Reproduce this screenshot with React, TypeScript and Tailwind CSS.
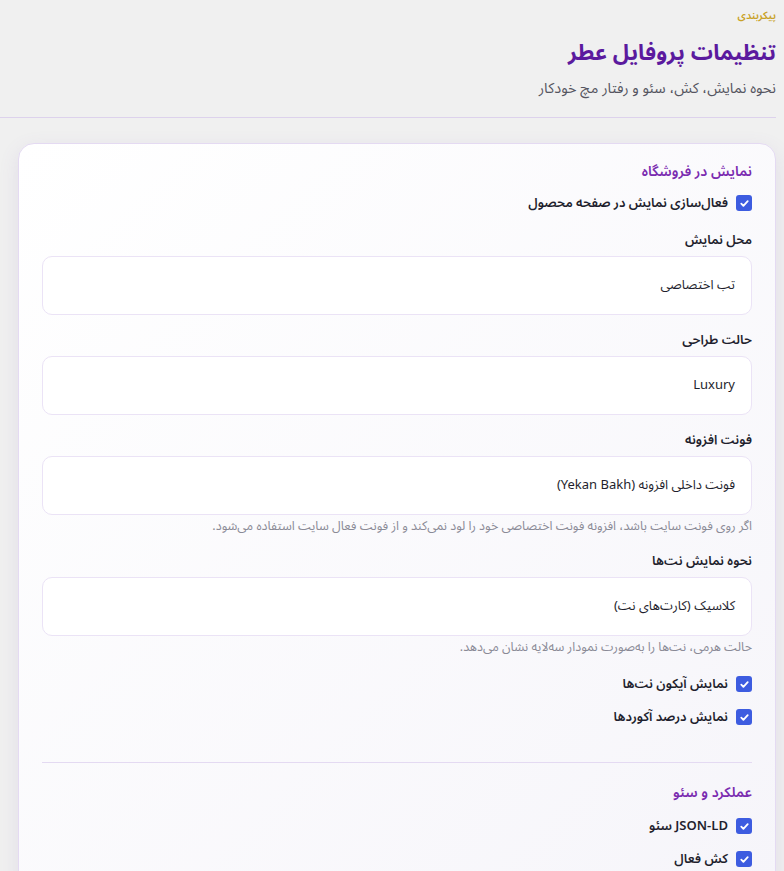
import React from "react";

const font = { fontFamily: '"Noto Sans Arabic", "Noto Sans", "DejaVu Sans", sans-serif' };

const Check: React.FC<{ label: React.ReactNode; className?: string }> = ({ label, className }) => (
  <label className={`flex h-5 items-center gap-2 text-[13px] font-semibold leading-5 text-[#1f1f2e] ${className ?? ""}`}>
    <span className="flex h-4 w-4 shrink-0 items-center justify-center rounded-[3px] bg-[#3d5ce0]">
      <svg width="11" height="11" viewBox="0 0 12 12" fill="none">
        <path d="M2.5 6.2l2.3 2.3 4.7-5" stroke="white" strokeWidth="2" strokeLinecap="round" strokeLinejoin="round" />
      </svg>
    </span>
    <span>{label}</span>
  </label>
);

const Field: React.FC<{ label: string; value: string; help?: string; className?: string }> = ({ label, value, help, className }) => (
  <div className={className ?? "mt-[15px]"}>
    <div className="text-[13px] font-semibold leading-5 text-[#1f1f2e]">{label}</div>
    <div className="mt-[6px] flex h-[59px] items-center rounded-[10px] border border-[#ebe3f6] bg-white px-4 text-[13px] text-[#1f1f2e]">
      {value}
    </div>
    {help && <p className="mt-[3px] text-[12.5px] leading-4 text-[#8a8a96]">{help}</p>}
  </div>
);

export default function App() {
  return (
    <div dir="rtl" style={font} className="min-h-screen bg-[#f0f0f0] pr-2">
      <header className="pt-[6px]">
        <div className="text-[10.5px] font-semibold leading-5 text-[#c9a227]">پیکربندی</div>
        <h1 className="mt-[11px] text-[22px] font-bold leading-8 text-[#5b1a9e]">تنظیمات پروفایل عطر</h1>
        <p className="mt-[9px] text-[14.5px] leading-[22px] text-[#555560]">نحوه نمایش، کش، سئو و رفتار مچ خودکار</p>
      </header>
      <hr className="mt-[17px] border-t border-[#ddd2ec]" />
      <div className="ml-[18px] mt-[25px] rounded-[16px] border border-[#e4daf2] bg-gradient-to-br from-white to-[#f6f5fa] px-[23px] pt-[18px] pb-6 shadow-[0_6px_20px_rgba(120,90,170,0.12)]">
        <h2 className="text-[14px] font-semibold leading-5 text-[#7a2bb0]">نمایش در فروشگاه</h2>
        <Check className="mt-[11px]" label="فعال‌سازی نمایش در صفحه محصول" />
        <Field className="mt-[17px]" label="محل نمایش" value="تب اختصاصی" />
        <Field label="حالت طراحی" value="Luxury" />
        <Field
          label="فونت افزونه"
          value="فونت داخلی افزونه (Yekan Bakh)"
          help="اگر روی فونت سایت باشد، افزونه فونت اختصاصی خود را لود نمی‌کند و از فونت فعال سایت استفاده می‌شود."
        />
        <Field
          className="mt-[17px]"
          label="نحوه نمایش نت‌ها"
          value="کلاسیک (کارت‌های نت)"
          help="حالت هرمی، نت‌ها را به‌صورت نمودار سه‌لایه نشان می‌دهد."
        />
        <div className="mt-[19px] flex flex-col gap-[13px]">
          <Check label="نمایش آیکون نت‌ها" />
          <Check label="نمایش درصد آکوردها" />
        </div>
        <hr className="mt-[35px] border-t border-[#e4daf2]" />
        <h2 className="mt-[20px] text-[14px] font-semibold leading-5 text-[#7a2bb0]">عملکرد و سئو</h2>
        <div className="mt-[13px] flex flex-col gap-[13px]">
          <Check label="JSON-LD سئو" />
          <Check label="کش فعال" />
        </div>
      </div>
    </div>
  );
}
